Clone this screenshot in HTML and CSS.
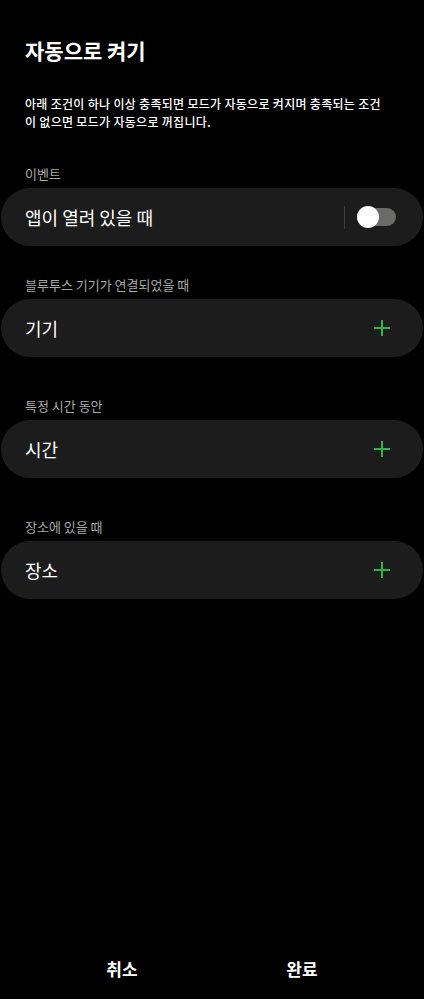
FILE: index.html
```html
<!DOCTYPE html>
<html>
<head>
    <meta charset="utf-8" />
    <title>자동으로 켜기</title>
    <link rel="stylesheet" href="styles.css">
</head>
<body>
    <div class="page">
        <h1 class="title">자동으로 켜기</h1>
        <p class="desc">아래 조건이 하나 이상 충족되면 모드가 자동으로 켜지며 충족되는 조건<br>이 없으면 모드가 자동으로 꺼집니다.</p>

        <div class="section first">
            <div class="label">이벤트</div>
            <div class="card">
                <span class="card-text">앱이 열려 있을 때</span>
                <span class="divider"></span>
                <span class="switch"><span class="knob"></span></span>
            </div>
        </div>

        <div class="section">
            <div class="label">블루투스 기기가 연결되었을 때</div>
            <div class="card">
                <span class="card-text">기기</span>
                <svg class="plus" width="18" height="18" viewBox="0 0 18 18"><path d="M9 1v16M1 9h16" stroke="#2fb24e" stroke-width="2" fill="none"/></svg>
            </div>
        </div>

        <div class="section">
            <div class="label">특정 시간 동안</div>
            <div class="card">
                <span class="card-text">시간</span>
                <svg class="plus" width="18" height="18" viewBox="0 0 18 18"><path d="M9 1v16M1 9h16" stroke="#2fb24e" stroke-width="2" fill="none"/></svg>
            </div>
        </div>

        <div class="section">
            <div class="label">장소에 있을 때</div>
            <div class="card">
                <span class="card-text">장소</span>
                <svg class="plus" width="18" height="18" viewBox="0 0 18 18"><path d="M9 1v16M1 9h16" stroke="#2fb24e" stroke-width="2" fill="none"/></svg>
            </div>
        </div>

        <div class="footer">
            <div class="btn">취소</div>
            <div class="btn">완료</div>
        </div>
    </div>
</body>
</html>
```

FILE: styles.css
```css
html, body {
    margin: 0;
    height: 100%;
    background-color: #000;
    color: #fff;
    font-family: "Noto Sans CJK KR", "Noto Sans", sans-serif;
}

.page {
    height: 999px;
    display: flex;
    flex-direction: column;
}

.title {
    margin: 36px 0 0 25px;
    font-size: 21px;
    line-height: 28px;
    font-weight: 700;
}

.desc {
    margin: 31px 0 0 25px;
    font-size: 12px;
    line-height: 17.5px;
    font-weight: 500;
    letter-spacing: 0.3px;
}

.section {
    margin-top: 30px;
}

.section.first {
    margin-top: 35px;
}

.section + .section + .section {
    margin-top: 40px;
}

.label {
    margin: 0 0 5px 25px;
    font-size: 13px;
    line-height: 18px;
    color: #a9a9a9;
}

.card {
    height: 58px;
    margin: 0 1px;
    padding: 0 32px 0 24px;
    border-radius: 29px;
    background-color: #1c1c1c;
    display: flex;
    align-items: center;
}

.card-text {
    flex-grow: 1;
    font-size: 18px;
    font-weight: 400;
}

.divider {
    width: 1px;
    height: 23px;
    background-color: #3c3c3c;
    margin-right: 12px;
}

.switch {
    position: relative;
    width: 39px;
    height: 18px;
    margin-right: -5px;
    border-radius: 9px;
    background-color: #6b6b68;
}

.knob {
    position: absolute;
    left: 0;
    top: -2px;
    width: 22px;
    height: 22px;
    border-radius: 50%;
    background-color: #fff;
}

.footer {
    margin-top: auto;
    padding: 0 32px 18px;
    display: flex;
}

.btn {
    flex: 1;
    text-align: center;
    font-size: 17px;
    line-height: 24px;
    font-weight: 700;
}
```
